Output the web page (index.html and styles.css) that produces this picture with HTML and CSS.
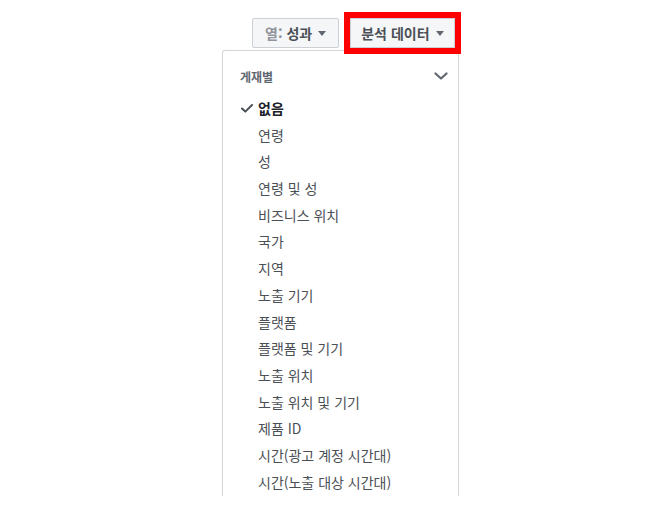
FILE: index.html
```html
<!DOCTYPE html>
<html lang="ko">
<head>
    <meta charset="UTF-8">
    <title>분석 데이터</title>
    <link rel="stylesheet" href="styles.css">
</head>
<body>
    <div class="toolbar">
        <button class="tool-button">
            <span class="label-dim">열:</span>
            <span>성과</span>
            <span class="caret"></span>
        </button>
        <div class="highlight">
            <button class="tool-button wide">
                <span>분석 데이터</span>
                <span class="caret"></span>
            </button>
        </div>
    </div>

    <div class="menu">
        <div class="menu-header">
            <span>게재별</span>
            <svg class="chevron" width="14" height="8" viewBox="0 0 14 8">
                <path d="M1.5 1.5 L7 6.5 L12.5 1.5" fill="none" stroke="#606770" stroke-width="2.2" stroke-linecap="round" stroke-linejoin="round"/>
            </svg>
        </div>
        <ul class="menu-list">
            <li class="menu-item selected">
                <svg class="check" width="12" height="9" viewBox="0 0 12 9">
                    <path d="M1 4.5 L4.3 7.6 L11 1" fill="none" stroke="#4b4f56" stroke-width="2" stroke-linecap="round" stroke-linejoin="round"/>
                </svg>
                없음
            </li>
            <li class="menu-item">연령</li>
            <li class="menu-item">성</li>
            <li class="menu-item">연령 및 성</li>
            <li class="menu-item">비즈니스 위치</li>
            <li class="menu-item">국가</li>
            <li class="menu-item">지역</li>
            <li class="menu-item">노출 기기</li>
            <li class="menu-item">플랫폼</li>
            <li class="menu-item">플랫폼 및 기기</li>
            <li class="menu-item">노출 위치</li>
            <li class="menu-item">노출 위치 및 기기</li>
            <li class="menu-item">제품 ID</li>
            <li class="menu-item">시간(광고 계정 시간대)</li>
            <li class="menu-item">시간(노출 대상 시간대)</li>
        </ul>
    </div>
</body>
</html>
```

FILE: styles.css
```css
body {
    margin: 0;
    font-family: "Noto Sans CJK KR", "Noto Sans", Arial, sans-serif;
    background: #fff;
    color: #4b4f56;
}
.toolbar {
    display: flex;
    align-items: flex-start;
    padding: 12px 0 0 252px;
}
.tool-button {
    display: flex;
    align-items: center;
    gap: 4px;
    height: 30px;
    margin-top: 6px;
    padding: 0 12px;
    background: #f5f6f7;
    border: 1px solid #ccd0d5;
    border-radius: 2px;
    font-family: inherit;
    font-size: 14px;
    font-weight: bold;
    color: #4b4f56;
    white-space: nowrap;
}
.label-dim {
    color: #90949c;
}
.caret {
    margin-left: 2px;
    width: 0;
    height: 0;
    border-left: 4.5px solid transparent;
    border-right: 4.5px solid transparent;
    border-top: 5px solid #606770;
}
.highlight {
    margin-left: 5px;
    border: 6px solid #ff0000;
}
.tool-button.wide {
    margin-top: 0;
    width: 105px;
    padding: 0 10px;
    border-radius: 0;
}
.menu {
    margin: -4px 0 0 222px;
    width: 237px;
    height: 446px;
    box-sizing: border-box;
    overflow: hidden;
    border: 1px solid #d4d6da;
    border-bottom: none;
    border-radius: 3px 3px 0 0;
    box-shadow: 0 0 1px rgba(0, 0, 0, 0.15);
    padding-top: 12px;
}
.menu-header {
    display: flex;
    justify-content: space-between;
    align-items: center;
    height: 26px;
    padding: 0 10px 0 17px;
    margin-bottom: 6px;
    font-size: 12px;
    font-weight: bold;
    color: #606770;
}
.menu-list {
    list-style: none;
    margin: 0;
    padding: 0;
}
.menu-item {
    position: relative;
    height: 26.7px;
    line-height: 26.7px;
    padding-left: 35px;
    font-size: 14px;
    color: #4b4f56;
}
.menu-item.selected {
    font-weight: bold;
    color: #1d2129;
}
.check {
    position: absolute;
    left: 18px;
    top: 9px;
}
```
